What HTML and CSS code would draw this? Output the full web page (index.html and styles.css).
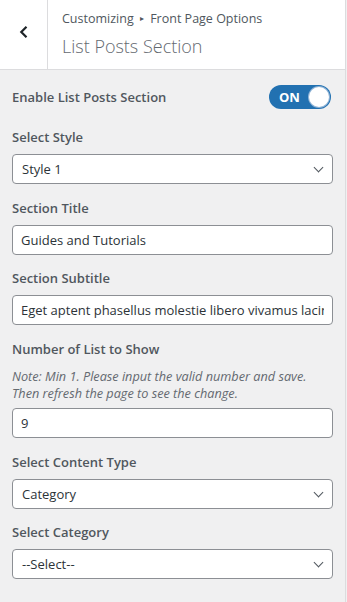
FILE: index.html
```html
<!DOCTYPE html>
<html lang="en">
	<head>
		<meta charset="UTF-8" />
		<meta name="viewport" content="width=device-width, initial-scale=1.0" />
		<title>Customizing - List Posts Section</title>
		<link rel="stylesheet" href="styles.css">
	</head>
	<body>
		<div class="panel">
			<div class="panel-header">
				<button class="back-btn" aria-label="Back">
					<svg width="12" height="14" viewBox="0 0 12 14"><path d="M8.5 1.8 L3.3 7 L8.5 12.2" fill="none" stroke="#1d2327" stroke-width="2.2" /></svg>
				</button>
				<div class="panel-title">
					<span class="crumb">Customizing <span class="crumb-sep">▸</span> Front Page Options</span>
					<h3>List Posts Section</h3>
				</div>
			</div>

			<div class="controls">
				<div class="control control-toggle">
					<span class="control-label">Enable List Posts Section</span>
					<div class="toggle">
						<span class="toggle-text">ON</span>
						<span class="toggle-knob"></span>
					</div>
				</div>

				<div class="control">
					<label class="control-label">Select Style</label>
					<div class="field select">Style 1</div>
				</div>

				<div class="control">
					<label class="control-label" for="section_title">Section Title</label>
					<input class="field" id="section_title" type="text" value="Guides and Tutorials" />
				</div>

				<div class="control">
					<label class="control-label" for="section_subtitle">Section Subtitle</label>
					<input class="field" id="section_subtitle" type="text" value="Eget aptent phasellus molestie libero vivamus lacinia" />
				</div>

				<div class="control">
					<label class="control-label" for="list_number">Number of List to Show</label>
					<p class="note">Note: Min 1. Please input the valid number and save. Then refresh the page to see the change.</p>
					<input class="field" id="list_number" type="text" value="9" />
				</div>

				<div class="control">
					<label class="control-label">Select Content Type</label>
					<div class="field select">Category</div>
				</div>

				<div class="control">
					<label class="control-label">Select Category</label>
					<div class="field select">--Select--</div>
				</div>
			</div>
		</div>
	</body>
</html>
```

FILE: styles.css
```css
* {
	box-sizing: border-box;
	margin: 0;
	padding: 0;
}
body {
	font-family: "Open Sans", "Noto Sans", sans-serif;
	background-color: #f0f0f1;
	color: #1d2327;
	font-size: 13px;
	width: 347px;
	height: 602px;
	overflow: hidden;
}
.panel {
	width: 346px;
	height: 602px;
	border-right: 1px solid #dcdcde;
	background: #f0f0f1;
}
.panel-header {
	display: flex;
	height: 70px;
	background: white;
	border-bottom: 1px solid #dcdcde;
}
.back-btn {
	width: 48px;
	height: 69px;
	border: none;
	border-right: 1px solid #dcdcde;
	background: white;
	display: flex;
	align-items: center;
	justify-content: center;
	padding-bottom: 6px;
}
.panel-title {
	padding: 8px 0 0 14px;
	display: flex;
	flex-direction: column;
}
.crumb {
	font-size: 12.5px;
	color: #50575e;
	line-height: 20px;
}
.crumb-sep {
	font-size: 8px;
	vertical-align: 2px;
	margin: 0 3px;
}
h3 {
	font-size: 18px;
	font-weight: 300;
	color: #646970;
	line-height: 28px;
	margin-top: 3px;
}
.controls {
	padding: 15px 12px 0 12px;
}
.control {
	margin-bottom: 13.5px;
}
.control-label {
	display: block;
	font-weight: 600;
	font-size: 13px;
	color: #50575e;
	line-height: 20px;
	margin-bottom: 7px;
}
.control-toggle {
	display: flex;
	align-items: center;
	justify-content: space-between;
	margin-bottom: 18px;
	padding-right: 2px;
}
.control-toggle .control-label {
	margin-bottom: 0;
}
.toggle {
	width: 62px;
	height: 24px;
	background: #2271b1;
	border-radius: 12px;
	display: flex;
	align-items: center;
	justify-content: space-between;
	padding: 0 2px 0 10px;
}
.toggle-text {
	color: white;
	font-weight: 700;
	font-size: 13px;
}
.toggle-knob {
	width: 20px;
	height: 20px;
	border-radius: 50%;
	background: white;
	box-shadow: 0 0 0 1px #8fb3d6;
}
.field {
	display: block;
	width: 321px;
	height: 30px;
	background: white;
	border: 1px solid #8c8f94;
	border-radius: 4px;
	padding: 0 8px;
	line-height: 28px;
	white-space: nowrap;
	overflow: hidden;
	font-family: inherit;
	font-size: 13px;
	color: #2c3338;
	outline: none;
}
.select {
	position: relative;
	padding-left: 9px;
}
.select::after {
	content: "";
	position: absolute;
	right: 10px;
	top: 9px;
	width: 6px;
	height: 6px;
	border-right: 1.6px solid #50575e;
	border-bottom: 1.6px solid #50575e;
	transform: rotate(45deg);
}
.note {
	font-style: italic;
	font-size: 12.7px;
	color: #646970;
	line-height: 17px;
	margin: 9px 0 6.5px 0;
}
```
